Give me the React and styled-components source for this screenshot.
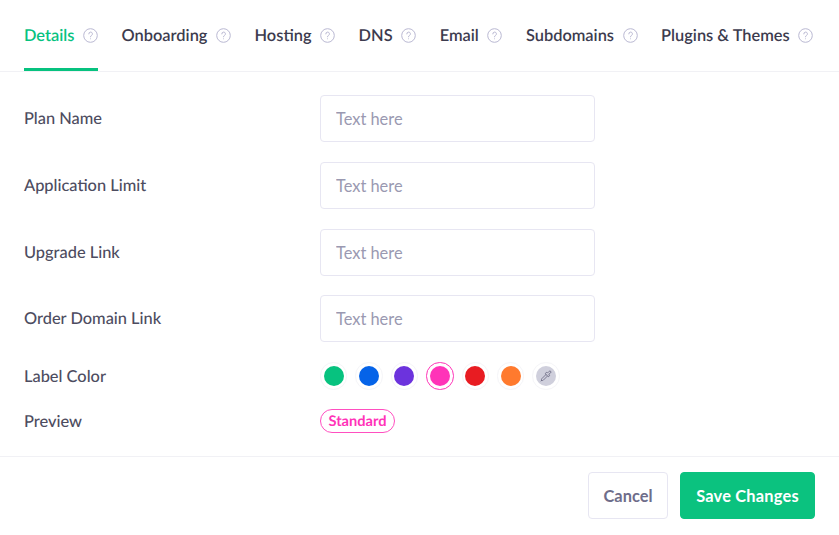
import styled, { createGlobalStyle } from "styled-components";
import { Pipette } from "lucide-react";

const GlobalStyle = createGlobalStyle`
  * {
    box-sizing: border-box;
  }
  html, body {
    margin: 0;
    background: #fff;
    font-family: "Lato", "Noto Sans", sans-serif;
    text-rendering: geometricPrecision;
  }
`;

const Page = styled.div`
  width: 839px;
  height: 535px;
  overflow: hidden;
  background: #fff;
`;

const Tabs = styled.nav`
  display: flex;
  gap: 23.6px;
  height: 72px;
  padding: 0 0 0 24px;
  border-bottom: 1px solid #f1f1f5;
`;

const Tab = styled.div`
  display: flex;
  align-items: center;
  gap: 8.5px;
  height: 71px;
  padding-top: 3px;
  border-bottom: 3px solid ${(p) => (p.$active ? "#07c27f" : "transparent")};
  font-size: 16.4px;
  font-weight: 600;
  white-space: nowrap;
  color: ${(p) => (p.$active ? "#07c27f" : "#3c3b4e")};
`;

const HelpIcon = styled.svg`
  width: 15px;
  height: 15px;
  flex: none;
`;

const Form = styled.div`
  display: flex;
  flex-direction: column;
  padding: 23px 24px 0;
  height: 385px;
  border-bottom: 1px solid #f1f1f5;
`;

const Row = styled.div`
  display: grid;
  grid-template-columns: 296px 275px;
  align-items: center;
  height: ${(p) => p.$height}px;
  margin-bottom: ${(p) => p.$gap || 0}px;
  font-size: 16.4px;
  font-weight: 500;
  color: #4d4c60;
`;

const Input = styled.input`
  width: 275px;
  height: 47px;
  padding: 0 15px;
  border: 1px solid #e7e6f2;
  border-radius: 4px;
  outline: none;
  font: inherit;
  font-weight: 400;
  color: #4d4c60;

  &::placeholder {
    color: #9a99b1;
    opacity: 1;
  }
`;

const Swatches = styled.div`
  display: flex;
  gap: 8px;
`;

const Swatch = styled.div`
  display: flex;
  align-items: center;
  justify-content: center;
  width: 27.4px;
  height: 27.4px;
  border-radius: 50%;
  border: ${(p) => (p.$selected ? "1.5px" : "1px")} solid ${(p) => (p.$selected ? p.$color : "#f5f5f8")};
`;

const Dot = styled.div`
  display: flex;
  align-items: center;
  justify-content: center;
  width: 20px;
  height: 20px;
  border-radius: 50%;
  background: ${(p) => p.$color};
  color: #5f5e78;
`;

const Badge = styled.span`
  justify-self: start;
  display: inline-flex;
  align-items: center;
  height: 24px;
  padding: 0 7.5px;
  border: 1.5px solid #ff4fc0;
  border-radius: 12px;
  font-size: 14.6px;
  font-weight: 700;
  color: #ff33b8;
`;

const Footer = styled.footer`
  display: flex;
  justify-content: flex-end;
  gap: 12px;
  padding: 15px 24px 0;
`;

const Button = styled.button`
  height: 47px;
  padding: 0;
  width: ${(p) => p.$width}px;
  border: 1px solid ${(p) => (p.$primary ? "#0bc27f" : "#e7e6f2")};
  border-radius: 4px;
  background: ${(p) => (p.$primary ? "#0bc27f" : "#fff")};
  color: ${(p) => (p.$primary ? "#fff" : "#6e6d8a")};
  font-family: inherit;
  font-size: 16.4px;
  font-weight: 700;
  letter-spacing: ${(p) => (p.$primary ? "0.2px" : "0")};
`;

const tabs = ["Details", "Onboarding", "Hosting", "DNS", "Email", "Subdomains", "Plugins & Themes"];
const fields = ["Plan Name", "Application Limit", "Upgrade Link", "Order Domain Link"];
const colors = ["#07c27f", "#0563e8", "#6c33dd", "#ff33b8", "#e81c22", "#ff7a2e"];

function Help() {
  return (
    <HelpIcon viewBox="0 0 15 15" fill="none" stroke="#b9b8d2" strokeWidth="1">
      <circle cx="7.5" cy="7.5" r="6.8" />
      <path d="M5.8 5.9a1.8 1.8 0 1 1 2.6 1.6c-.6.3-.9.7-.9 1.3" strokeLinecap="round" />
      <circle cx="7.5" cy="10.7" r=".5" fill="#b9b8d2" stroke="none" />
    </HelpIcon>
  );
}

function App() {
  return (
    <Page>
      <GlobalStyle />
      <Tabs>
        {tabs.map((tab, i) => (
          <Tab key={tab} $active={i === 0}>
            {tab}
            <Help />
          </Tab>
        ))}
      </Tabs>
      <Form>
        {fields.map((field) => (
          <Row key={field} $height={47} $gap={19.8}>
            {field}
            <Input placeholder="Text here" />
          </Row>
        ))}
        <Row $height={28} $gap={17}>
          Label Color
          <Swatches>
            {colors.map((color, i) => (
              <Swatch key={color} $color={color} $selected={i === 3}>
                <Dot $color={color} />
              </Swatch>
            ))}
            <Swatch>
              <Dot $color="#cfcfdc">
                <Pipette size={12} strokeWidth={1.5} />
              </Dot>
            </Swatch>
          </Swatches>
        </Row>
        <Row $height={28}>
          Preview
          <Badge>Standard</Badge>
        </Row>
      </Form>
      <Footer>
        <Button $width={80}>Cancel</Button>
        <Button $width={135} $primary>
          Save Changes
        </Button>
      </Footer>
    </Page>
  );
}

export default App;
